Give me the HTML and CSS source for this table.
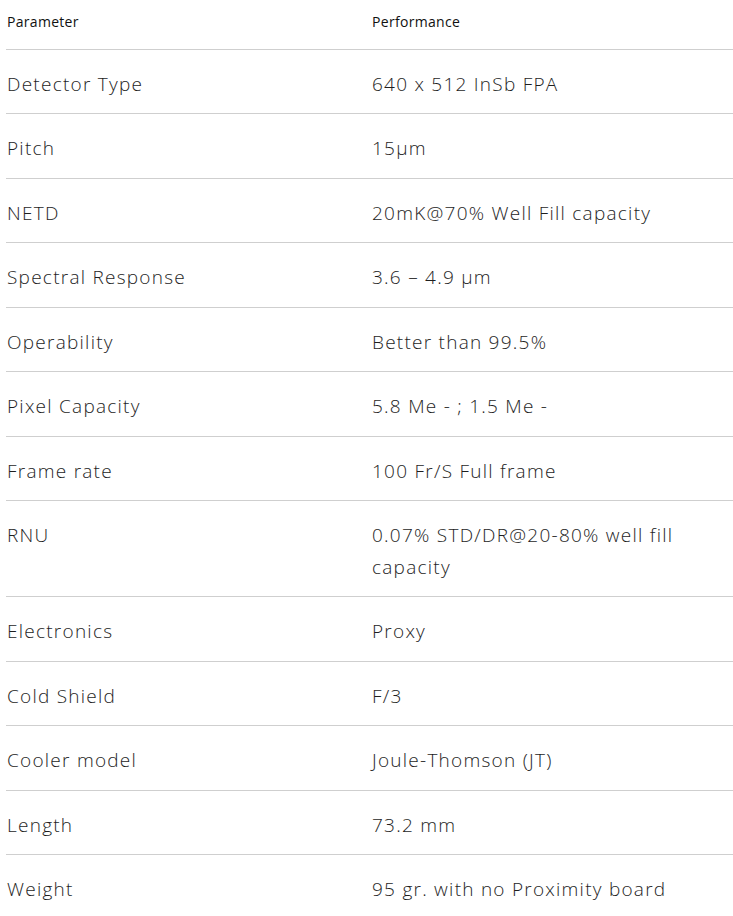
FILE: index.html
```html
<!DOCTYPE html>
<html>
<head>
<meta charset="utf-8">
<link rel="stylesheet" href="styles.css">
</head>
<body>
<table class="spec">
  <thead>
    <tr><th>Parameter</th><th>Performance</th></tr>
  </thead>
  <tbody>
    <tr><td>Detector Type</td><td>640 x 512 InSb FPA</td></tr>
    <tr><td>Pitch</td><td>15μm</td></tr>
    <tr><td>NETD</td><td>20mK@70% Well Fill capacity</td></tr>
    <tr><td>Spectral Response</td><td>3.6 – 4.9 μm</td></tr>
    <tr><td>Operability</td><td>Better than 99.5%</td></tr>
    <tr><td>Pixel Capacity</td><td>5.8 Me - ; 1.5 Me -</td></tr>
    <tr><td>Frame rate</td><td>100 Fr/S Full frame</td></tr>
    <tr><td>RNU</td><td>0.07% STD/DR@20-80% well fill capacity</td></tr>
    <tr><td>Electronics</td><td>Proxy</td></tr>
    <tr><td>Cold Shield</td><td>F/3</td></tr>
    <tr><td>Cooler model</td><td>Joule-Thomson (JT)</td></tr>
    <tr><td>Length</td><td>73.2 mm</td></tr>
    <tr><td>Weight</td><td>95 gr. with no Proximity board</td></tr>
  </tbody>
</table>
</body>
</html>
```
FILE: styles.css
```css
html, body {
  margin: 0;
  padding: 0;
  background: #fff;
}
body {
  padding-left: 6px;
  overflow: hidden;
  font-family: "Open Sans", Lato, sans-serif;
  color: #222;
}
.spec {
  width: 730px;
  border-collapse: collapse;
  table-layout: fixed;
}
.spec th {
  text-align: left;
  font-weight: 400;
  font-size: 14px;
  line-height: 20px;
  letter-spacing: 0.3px;
  padding: 11.5px 0 17px 1px;
  border-bottom: 1px solid #cfcfcf;
  color: #111;
}
.spec td {
  vertical-align: top;
  font-weight: 300;
  font-size: 19px;
  line-height: 31.5px;
  letter-spacing: 1.25px;
  padding: 19px 0 13px 1px;
  border-bottom: 1px solid #cfcfcf;
  color: #1e1e1e;
}
.spec tbody tr:last-child td {
  border-bottom: none;
}
```
